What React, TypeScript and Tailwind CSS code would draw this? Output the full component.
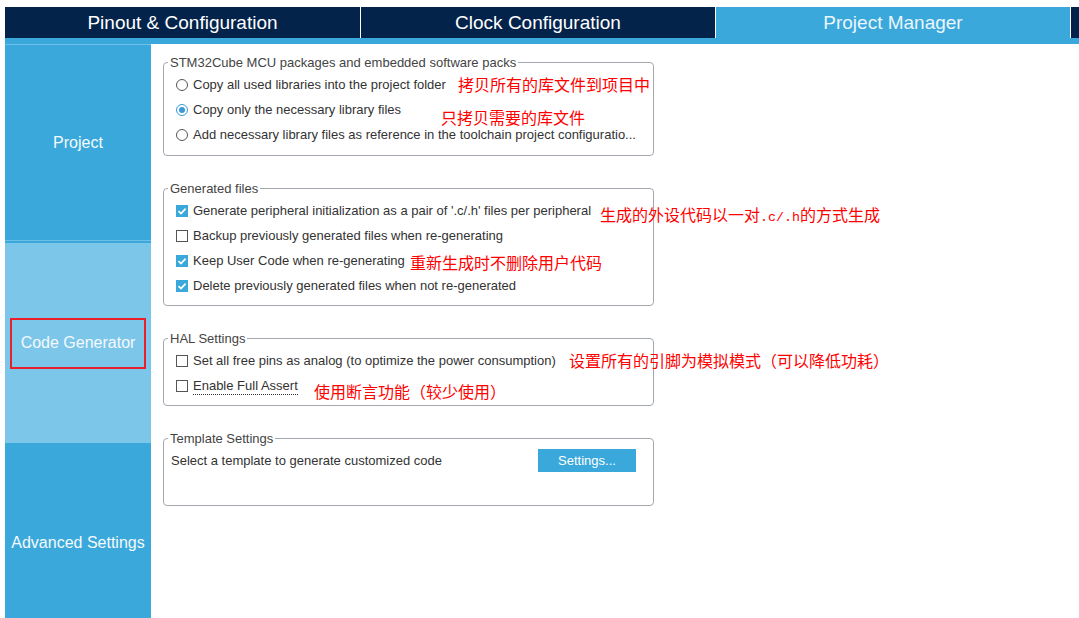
import React from "react";

const BLUE = "bg-[#3aa8db]";

const Check = ({ checked }: { checked: boolean }) =>
  checked ? (
    <span className="w-[12px] h-[12px] bg-[#3aa8db] flex items-center justify-center shrink-0">
      <svg width="12" height="12" viewBox="0 0 12 12">
        <polyline points="2.5,6.2 5,8.6 9.6,3.6" fill="none" stroke="#fff" strokeWidth="1.7" />
      </svg>
    </span>
  ) : (
    <span className="w-[12px] h-[12px] border border-[#555] bg-white shrink-0" />
  );

const Radio = ({ checked }: { checked: boolean }) => (
  <span
    className={
      "w-[12px] h-[12px] rounded-full border bg-white flex items-center justify-center shrink-0 " +
      (checked ? "border-[#3a9ad9]" : "border-[#555]")
    }
  >
    {checked && <span className="w-[6px] h-[6px] rounded-full bg-[#3a9ad9]" />}
  </span>
);

const Row = ({ children, control }: { children: React.ReactNode; control: React.ReactNode }) => (
  <div className="h-[25px] flex items-center gap-[5px] pl-[12px]">
    {control}
    <span>{children}</span>
  </div>
);

const Group = ({ title, children, extra }: { title: string; children: React.ReactNode; extra?: string }) => (
  <fieldset className={"w-[491px] border border-[#a3a8ae] rounded-[4px] pt-[2px] " + (extra ?? "pb-[8px]")}>
    <legend className="ml-[4px] px-[2px] leading-[15px] text-[#444]">{title}</legend>
    {children}
  </fieldset>
);

const Note = ({ top, left, children }: { top: number; left: number; children: React.ReactNode }) => (
  <div
    className="absolute text-[16px] leading-[16px] text-[#ff0000] whitespace-nowrap font-['Noto_Sans_CJK_SC',sans-serif]"
    style={{ top, left }}
  >
    {children}
  </div>
);

const SideItem = ({ label, light, boxed }: { label: string; light?: boolean; boxed?: boolean }) => (
  <div className={"flex-1 flex items-center justify-center " + (light ? "bg-[#7cc6ea]" : BLUE)}>
    <span
      className={
        "text-[#f4fafd] text-[16px] " +
        (boxed ? "border-2 border-[#e8202a] w-[136px] h-[51px] flex items-center justify-center" : "")
      }
    >
      {label}
    </span>
  </div>
);

export default function App() {
  return (
    <div className="relative h-[618px] w-[1079px] overflow-hidden bg-white pt-[7px] pl-[5px] font-['Liberation_Sans',Arial,sans-serif] text-[13px] text-[#333]">
      {/* tabs */}
      <div className="flex h-[31px] bg-[#03234b] text-white text-[19px]">
        <div className="w-[355px] flex items-center justify-center pt-px">Pinout &amp; Configuration</div>
        <div className="w-px bg-white" />
        <div className="w-[354px] flex items-center justify-center pt-px">Clock Configuration</div>
        <div className="w-px bg-white" />
        <div className={"w-[354px] flex items-center justify-center pt-px text-[#eaf6fc] " + BLUE}>Project Manager</div>
        <div className="w-px bg-white" />
        <div className="flex-1" />
      </div>
      <div className={"h-[6px] " + BLUE} />

      <div className="flex h-[574px]">
        {/* sidebar */}
        <div className="w-[146px] flex flex-col shrink-0">
          <div className="h-[199px] flex flex-col shrink-0">
            <div className="h-px bg-[#6fc0e8]" />
            <SideItem label="Project" />
            <div className="h-px bg-[#6fc0e8]" />
            <div className={"h-[2px] " + BLUE} />
          </div>
          <div className="h-[200px] flex flex-col shrink-0">
            <SideItem label="Code Generator" light boxed />
          </div>
          <div className="h-[200px] flex flex-col shrink-0">
            <SideItem label="Advanced Settings" />
          </div>
        </div>

        {/* main */}
        <div className="flex-1 pl-[12px] pt-[11px] flex flex-col gap-[25px]">
          <Group title="STM32Cube MCU packages and embedded software packs">
            <Row control={<Radio checked={false} />}>Copy all used libraries into the project folder</Row>
            <Row control={<Radio checked />}>Copy only the necessary library files</Row>
            <Row control={<Radio checked={false} />}>
              Add necessary library files as reference in the toolchain project configuratio...
            </Row>
          </Group>

          <Group title="Generated files" extra="pb-[7px]">
            <Row control={<Check checked />}>Generate peripheral initialization as a pair of '.c/.h' files per peripheral</Row>
            <Row control={<Check checked={false} />}>Backup previously generated files when re-generating</Row>
            <Row control={<Check checked />}>Keep User Code when re-generating</Row>
            <Row control={<Check checked />}>Delete previously generated files when not re-generated</Row>
          </Group>

          <Group title="HAL Settings" extra="pb-[7px]">
            <Row control={<Check checked={false} />}>Set all free pins as analog (to optimize the power consumption)</Row>
            <Row control={<Check checked={false} />}>
              <span className="border-b border-dotted border-[#333] pb-[1px]">Enable Full Assert</span>
            </Row>
          </Group>

          <Group title="Template Settings" extra="pb-[32px]">
            <div className="h-[25px] flex items-center pl-[7px]">
              <span className="w-[367px]">Select a template to generate customized code</span>
              <button className={"w-[98px] h-[23px] text-white text-[13px] " + BLUE}>Settings...</button>
            </div>
          </Group>
        </div>
      </div>

      {/* annotations */}
      <Note top={76} left={458}>拷贝所有的库文件到项目中</Note>
      <Note top={109} left={441}>只拷贝需要的库文件</Note>
      <Note top={206} left={600}>
        生成的外设代码以一对<span className="font-['Liberation_Mono',monospace] text-[13.3px]">.c/.h</span>的方式生成
      </Note>
      <Note top={254} left={410}>重新生成时不删除用户代码</Note>
      <Note top={352} left={569}>设置所有的引脚为模拟模式（可以降低功耗）</Note>
      <Note top={383} left={314}>使用断言功能（较少使用）</Note>
    </div>
  );
}
